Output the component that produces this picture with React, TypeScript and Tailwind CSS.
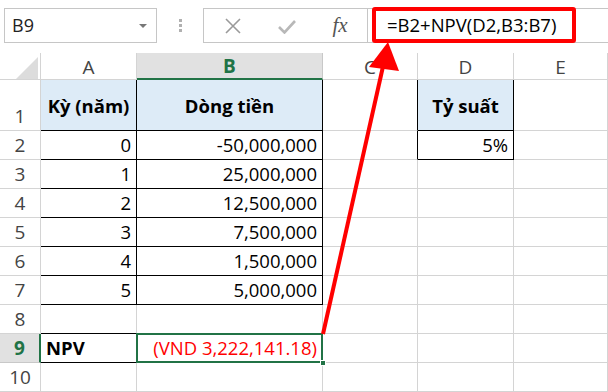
import React from "react";

const font = { fontFamily: '"Open Sans", "Noto Sans", sans-serif' };

type Cell = {
  text?: string;
  kind?: "head" | "num" | "bold" | "red";
  cls?: string;
};

const rows: Cell[][] = [
  [
    { text: "Kỳ (năm)", kind: "head", cls: "border-black" },
    { text: "Dòng tiền", kind: "head", cls: "border-black" },
    { cls: "border-r-black" },
    { text: "Tỷ suất", kind: "head", cls: "border-black" },
    {},
  ],
  [
    { text: "0", kind: "num", cls: "border-black" },
    { text: "-50,000,000", kind: "num", cls: "border-black" },
    { cls: "border-r-black" },
    { text: "5%", kind: "num", cls: "border-black" },
    {},
  ],
  ...[
    ["1", "25,000,000"],
    ["2", "12,500,000"],
    ["3", "7,500,000"],
    ["4", "1,500,000"],
    ["5", "5,000,000"],
  ].map(([a, b]): Cell[] => [
    { text: a, kind: "num", cls: "border-black" },
    { text: b, kind: "num", cls: "border-black" },
    {},
    {},
    {},
  ]),
  [{ cls: "border-b-black" }, {}, {}, {}, {}],
  [{ text: "NPV", kind: "bold", cls: "border-black" }, { text: "(VND 3,222,141.18)", kind: "red" }, {}, {}, {}],
  [{}, {}, {}, {}, {}],
];

const cols = ["A", "B", "C", "D", "E"];

function CellView({ c }: { c: Cell }) {
  const base = "border-r border-b border-[#d4d4d4] flex px-[5px] text-[18.5px] leading-none";
  if (c.kind === "head")
    return (
      <div className={`${base} ${c.cls ?? ""} bg-[#ddebf7] items-center justify-center font-bold text-black pt-[2px]`}>
        {c.text}
      </div>
    );
  if (c.kind === "num")
    return <div className={`${base} ${c.cls ?? ""} items-end justify-end pb-[5px] text-black`}>{c.text}</div>;
  if (c.kind === "bold")
    return <div className={`${base} ${c.cls ?? ""} items-end justify-start pb-[5px] font-bold text-black`}>{c.text}</div>;
  if (c.kind === "red")
    return (
      <div className={`${base} relative items-end justify-end pb-[5px] text-[#ff0000]`}>
        {c.text}
        <div className="absolute -left-px -top-px -right-px -bottom-px border-2 border-[#217346]" />
        <div className="absolute -right-[4px] -bottom-[4px] w-[6px] h-[6px] bg-[#217346] border border-white" />
      </div>
    );
  return <div className={`${base} ${c.cls ?? ""}`} />;
}

export default function App() {
  return (
    <div className="relative w-[608px] h-[392px] overflow-hidden bg-white" style={font}>
      {/* toolbar */}
      <div className="h-[53px] flex items-start pt-[8px] pl-[4px] gap-0">
        <div className="w-[153px] h-[35px] border border-[#c6c6c6] flex items-center justify-between pl-[7px] pr-[9px]">
          <span className="text-[18px] text-[#222]">B9</span>
          <span className="w-0 h-0 border-l-[4px] border-r-[4px] border-t-[4px] border-l-transparent border-r-transparent border-t-[#777]" />
        </div>
        <div className="w-[46px] h-[35px] flex flex-col items-center justify-center gap-[2px]">
          <span className="w-[3px] h-[3px] bg-[#b0b0b0]" />
          <span className="w-[3px] h-[3px] bg-[#b0b0b0]" />
          <span className="w-[3px] h-[3px] bg-[#b0b0b0]" />
        </div>
        <div className="w-[165px] h-[35px] border border-[#c6c6c6] flex items-center">
          <div className="w-[55px] flex justify-center pl-[2px]">
            <svg width="16" height="16" viewBox="0 0 16 16">
              <path d="M1 1 L15 15 M15 1 L1 15" stroke="#9a9a9a" strokeWidth="1.6" />
            </svg>
          </div>
          <div className="w-[56px] flex justify-center pt-[2px]">
            <svg width="18" height="14" viewBox="0 0 18 14">
              <path d="M1 7 L6.5 12.5 L17 1" stroke="#b8b8b8" strokeWidth="2.6" fill="none" />
            </svg>
          </div>
          <div className="w-[50px] flex justify-center">
            <span className="text-[21px] italic text-[#555] leading-none" style={{ fontFamily: '"Liberation Serif", serif' }}>
              fx
            </span>
          </div>
        </div>
        <div className="flex-1 h-[35px] border-t border-b border-[#c6c6c6] flex items-center pl-[19px]">
          <span className="text-[18.5px] text-black leading-none">=B2+NPV(D2,B3:B7)</span>
        </div>
      </div>

      {/* grid */}
      <div className="grid grid-cols-[41px_96px_186px_95px_96px_1fr] grid-rows-[27px_51px_repeat(9,29px)]">
        <div className="border-r border-b border-[#d4d4d4] relative">
          <div className="absolute left-[17px] top-[4px] w-0 h-0 border-l-[21px] border-t-[21px] border-l-transparent border-t-transparent border-b-0 border-r-0" />
          <svg className="absolute left-[16px] top-[4px]" width="22" height="22" viewBox="0 0 22 22">
            <polygon points="22,0 22,22 0,22" fill="#dcdcdc" />
          </svg>
        </div>
        {cols.map((c) =>
          c === "B" ? (
            <div
              key={c}
              className="bg-[#e1e1e1] border-r border-[#c8c8c8] border-b-2 border-b-[#217346] flex items-center justify-center text-[19px] font-bold text-[#217346] leading-none pt-[2px]"
            >
              {c}
            </div>
          ) : (
            <div
              key={c}
              className="border-r border-b border-[#d4d4d4] flex items-center justify-center text-[19px] text-[#444] leading-none pt-[2px]"
            >
              {c}
            </div>
          )
        )}
        {rows.map((r, i) => (
          <React.Fragment key={i}>
            {i === 8 ? (
              <div className="bg-[#e1e1e1] border-r-2 border-r-[#217346] border-b border-[#c8c8c8] flex items-end justify-center pb-[4px] text-[19px] font-bold text-[#217346] leading-none">
                {i + 1}
              </div>
            ) : (
              <div className="border-r border-b border-[#d4d4d4] flex items-end justify-center pb-[4px] text-[19px] text-[#444] leading-none">
                {i + 1}
              </div>
            )}
            {r.map((c, j) => (
              <CellView key={j} c={c} />
            ))}
          </React.Fragment>
        ))}
      </div>

      {/* annotation: red box + arrow */}
      <div className="absolute left-[372px] top-[7px] w-[204px] h-[36px] border-[4px] border-[#ff0000] rounded-[3px]" />
      <svg className="absolute left-0 top-0 pointer-events-none" width="608" height="392" viewBox="0 0 608 392">
        <line x1="323" y1="334" x2="384" y2="62" stroke="#ff0000" strokeWidth="4" />
        <polygon points="388,42 369,67 399,71" fill="#ff0000" />
      </svg>
    </div>
  );
}
